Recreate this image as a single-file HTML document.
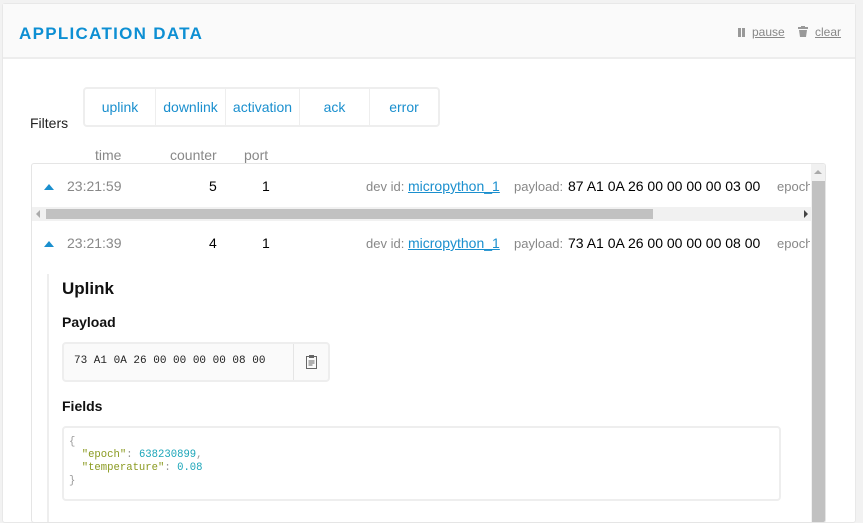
<!DOCTYPE html>
<html><head><style>
*{box-sizing:border-box;margin:0;padding:0}
body{width:863px;height:513px;overflow:hidden;background:#f2f2f2;font-family:"Liberation Sans",sans-serif;position:relative}
.card{position:absolute;left:2px;top:3px;width:854px;height:520px;background:#fff;border:1px solid #e8e8e8;border-radius:3px}
.hdr{position:absolute;left:0;top:0;width:100%;height:55px;background:#fafafa;border-bottom:2px solid #ededed}
.title{position:absolute;left:16px;top:20px;font-size:17px;font-weight:bold;letter-spacing:1.3px;color:#0d8fd3}
.act{position:absolute;top:21px;font-size:12px;color:#888;text-decoration:underline}
.a{position:absolute;font-size:14px}
.filt{position:absolute;left:83px;top:87px;width:357px;height:40px;border:2px solid #eee;border-radius:4px;display:flex}
.filt div{border-right:1px solid #eee;color:#1a8fce;font-size:14px;text-align:center;line-height:36px}
.tbl{position:absolute;left:31px;top:163px;width:795px;height:360px;border:1px solid #e5e5e5;border-radius:3px;overflow:hidden}
.g{color:#888}
.lnk{color:#1a8fce;text-decoration:underline}
</style></head><body>
<div class="card">
<div class="hdr"><div class="title">APPLICATION DATA</div>
<div style="position:absolute;left:735px;top:24px;width:3px;height:9px;background:#999;box-shadow:4px 0 0 #999"></div>
<div class="act" style="left:749px">pause</div>
<svg style="position:absolute;left:795px;top:22px" width="10" height="11" viewBox="0 0 10 11"><rect x="0" y="1" width="10" height="2" fill="#999"/><rect x="3" y="0" width="4" height="2" fill="#999"/><path d="M1 4h8l-1 7H2z" fill="#999"/></svg>
<div class="act" style="left:812px">clear</div>
</div>
</div>
<div class="a" style="left:30px;top:115px;color:#222">Filters</div>
<div class="filt"><div style="width:71px">uplink</div><div style="width:70px">downlink</div><div style="width:74px">activation</div><div style="width:70px">ack</div><div style="width:68px;border:none">error</div></div>
<div class="a g" style="left:95px;top:147px">time</div>
<div class="a g" style="left:170px;top:147px">counter</div>
<div class="a g" style="left:244px;top:147px">port</div>
<div class="tbl">
<div style="position:absolute;left:0;top:43px;width:780px;height:14px;background:#f1f1f1"><div style="position:absolute;left:14px;top:2px;width:607px;height:10px;background:#c1c1c1"></div><div style="position:absolute;left:4px;top:3px;border:4px solid transparent;border-right-color:#aaa;border-left:0"></div><div style="position:absolute;right:4px;top:3px;border:4px solid transparent;border-left-color:#444;border-right:0"></div></div>
<div style="position:absolute;left:779px;top:0;width:15px;height:360px;background:#f1f1f1"><div style="position:absolute;left:1px;top:17px;width:13px;height:360px;background:#c1c1c1"></div><div style="position:absolute;left:3px;top:6px;border:4px solid transparent;border-bottom-color:#aaa;border-top:0"></div></div>
<div style="position:absolute;left:15px;top:110px;width:2px;height:250px;background:#eee"></div>
</div>
<div style="position:absolute;left:44px;top:184px;border:5px solid transparent;border-bottom:6px solid #1a8fce;border-top:0"></div>
<div style="position:absolute;left:44px;top:241px;border:5px solid transparent;border-bottom:6px solid #1a8fce;border-top:0"></div>
<div class="a g" style="left:67px;top:178px">23:21:59</div>
<div class="a" style="left:209px;top:178px">5</div>
<div class="a" style="left:262px;top:178px">1</div>
<div class="a g" style="left:366px;top:179px;font-size:13px">dev id:</div>
<div class="a lnk" style="left:408px;top:178px">micropython_1</div>
<div class="a g" style="left:514px;top:179px;font-size:13px">payload:</div>
<div class="a" style="left:568px;top:178px">87 A1 0A 26 00 00 00 00 03 00</div>
<div class="a g" style="left:777px;top:179px;font-size:13px;width:33px;overflow:hidden">epoch</div>
<div class="a g" style="left:67px;top:235px">23:21:39</div>
<div class="a" style="left:209px;top:235px">4</div>
<div class="a" style="left:262px;top:235px">1</div>
<div class="a g" style="left:366px;top:236px;font-size:13px">dev id:</div>
<div class="a lnk" style="left:408px;top:235px">micropython_1</div>
<div class="a g" style="left:514px;top:236px;font-size:13px">payload:</div>
<div class="a" style="left:568px;top:235px">73 A1 0A 26 00 00 00 00 08 00</div>
<div class="a g" style="left:777px;top:236px;font-size:13px;width:33px;overflow:hidden">epoch</div>
<div class="a" style="left:62px;top:279px;font-size:17px;font-weight:bold;color:#111">Uplink</div>
<div class="a" style="left:62px;top:314px;font-size:14px;font-weight:bold;color:#111">Payload</div>
<div style="position:absolute;left:62px;top:342px;width:268px;height:40px;border:2px solid #eee;border-radius:4px;background:#fafafa">
<div style="position:absolute;left:10px;top:11px;font-family:'Liberation Mono',monospace;font-size:11px;color:#222">73 A1 0A 26 00 00 00 00 08 00</div>
<div style="position:absolute;left:229px;top:0;width:1px;height:36px;background:#e5e5e5"></div>
<svg style="position:absolute;left:242px;top:11px" width="11" height="14" viewBox="0 0 11 14"><rect x="0.5" y="1.5" width="10" height="12" fill="none" stroke="#666"/><rect x="3" y="0" width="5" height="3" fill="#666"/><path d="M2.5 6h6M2.5 8h6M2.5 10h4" stroke="#666"/></svg>
</div>
<div class="a" style="left:62px;top:398px;font-size:14px;font-weight:bold;color:#111">Fields</div>
<div style="position:absolute;left:62px;top:426px;width:719px;height:75px;border:2px solid #eee;border-radius:4px;font-family:'Liberation Mono',monospace;font-size:10.6px;line-height:13px;padding:8px 0 0 5px;white-space:pre;color:#999">{
  <span style="color:#8a9a20">"epoch"</span>: <span style="color:#1aa5b8">638230899</span>,
  <span style="color:#8a9a20">"temperature"</span>: <span style="color:#1aa5b8">0.08</span>
}</div>
</body></html>
